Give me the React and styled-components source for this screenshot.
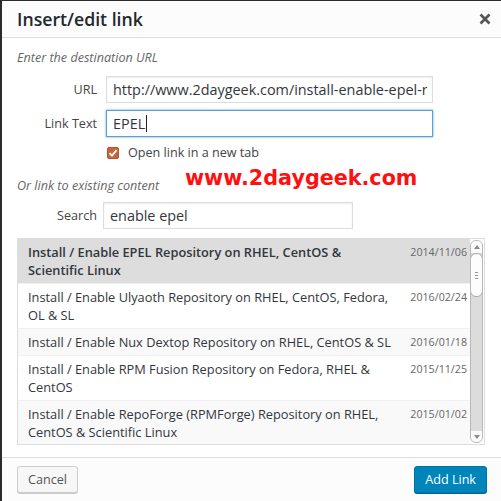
import React from "react";
import styled, { createGlobalStyle } from "styled-components";

const Global = createGlobalStyle`
  html, body { margin: 0; padding: 0; background: #2b2b2b; }
  body { font-family: "Open Sans", "Noto Sans", sans-serif; }
  * { box-sizing: border-box; }
`;

const Backdrop = styled.div`
  width: 501px;
  height: 501px;
  background: #2b2b2b;
  padding: 1px 0 0 2px;
`;

const Dialog = styled.div`
  width: 499px;
  height: 500px;
  background: #fff;
  display: flex;
  flex-direction: column;
  color: #444;
`;

const Header = styled.div`
  height: 37px;
  flex: none;
  background: #fcfcfc;
  border-bottom: 1px solid #dddddd;
  display: flex;
  align-items: center;
  justify-content: space-between;
  padding: 0 10px 0 15px;
`;

const Title = styled.h1`
  margin: 0;
  font-size: 17.7px;
  font-weight: 600;
  color: #23282d;
  line-height: 36px;
`;

const CloseIcon = styled.svg`
  display: block;
  margin-top: -1px;
`;

const Body = styled.div`
  flex: 1;
  position: relative;
  padding: 11px 14px 0 15px;
  display: flex;
  flex-direction: column;
  overflow: hidden;
`;

const Hint = styled.div`
  font-style: italic;
  font-size: 12.6px;
  color: #666;
  line-height: 18px;
  margin: ${(p) => p.$mt || 0}px 0 ${(p) => p.$mb || 0}px;
`;

const FieldRow = styled.div`
  display: flex;
  align-items: center;
  height: 27px;
  flex: none;
  margin-top: ${(p) => p.$mt || 0}px;
`;

const Label = styled.label`
  width: ${(p) => p.$w}px;
  flex: none;
  text-align: right;
  font-size: 12.6px;
  color: #444;
  padding-right: ${(p) => p.$pr}px;
`;

const Input = styled.div`
  width: ${(p) => p.$w}px;
  height: 27px;
  border: 1px solid ${(p) => (p.$focus ? "#5b9dd9" : "#dddddd")};
  box-shadow: ${(p) =>
    p.$focus ? "0 0 2px rgba(30,140,190,0.8)" : "inset 0 1px 2px rgba(0,0,0,0.07)"};
  background: #fff;
  font-size: 14.4px;
  color: #32373c;
  padding: 0 5px 0 6px;
  display: flex;
  align-items: center;
`;

const InputText = styled.span`
  flex: 1;
  display: flex;
  align-items: center;
  white-space: nowrap;
  overflow: hidden;
`;

const Caret = styled.span`
  display: inline-block;
  width: 1px;
  height: 17px;
  background: #222;
  margin-left: 1px;
`;

const CheckRow = styled.div`
  display: flex;
  align-items: center;
  margin: 7px 0 0 90px;
  font-size: 12.6px;
  line-height: 18px;
  color: #444;
  gap: 9px;
`;

const Check = styled.span`
  width: 12px;
  height: 12px;
  border-radius: 2px;
  background: #c9643c;
  border: 1px solid #b5532d;
  display: flex;
  align-items: center;
  justify-content: center;
`;

const Watermark = styled.span`
  position: absolute;
  left: 183px;
  top: 130px;
  font-family: "DejaVu Sans", "Verdana", sans-serif;
  font-weight: bold;
  font-size: 20.7px;
  line-height: 1;
  color: #ff0f0f;
  pointer-events: none;
`;

const List = styled.div`
  margin-top: 9px;
  width: 468px;
  height: 207px;
  border: 1px solid #dddddd;
  display: flex;
  overflow: hidden;
  flex: none;
`;

const Rows = styled.div`
  flex: 1;
  display: flex;
  flex-direction: column;
`;

const Row = styled.div`
  display: flex;
  justify-content: space-between;
  align-items: flex-start;
  flex: none;
  padding: 4px 3px 4px 10px;
  border-bottom: 1px solid #f1f1f1;
  background: ${(p) => (p.$sel ? "#dddddd" : p.$alt ? "#f9f9f9" : "#fff")};
  font-size: 12.8px;
  line-height: 18px;
  color: #32373c;
  font-weight: ${(p) => (p.$sel ? 600 : 400)};
`;

const RowTitle = styled.span`
  width: 369px;
`;

const RowDate = styled.span`
  font-size: 10.7px;
  color: #666;
  font-weight: 400;
`;

const Scrollbar = styled.div`
  width: 14px;
  flex: none;
  padding: 1px 1px 1px 0;
  display: flex;
  flex-direction: column;
`;

const Track = styled.div`
  flex: 1;
  border: 1px solid #b8b8b8;
  border-radius: 6px;
  background: #dcdcdc;
  display: flex;
  flex-direction: column;
  overflow: hidden;
`;

const ArrowCap = styled.div`
  height: ${(p) => p.$h}px;
  background: #fbfbfb;
  display: flex;
  align-items: center;
  justify-content: center;
  flex: none;
`;

const Thumb = styled.div`
  height: 44px;
  background: #fdfdfd;
  border: 1px solid #a9a9a9;
  border-radius: 6px;
  margin: 0 -1px;
  display: flex;
  flex-direction: column;
  align-items: center;
  justify-content: center;
  gap: 2px;
  flex: none;
`;

const Grip = styled.span`
  width: 3px;
  height: 1px;
  background: #999;
`;

const Spacer = styled.div`
  flex: 1;
`;

const Footer = styled.div`
  height: 44px;
  flex: none;
  background: #fcfcfc;
  border-top: 1px solid #dddddd;
  display: flex;
  align-items: center;
  justify-content: space-between;
  padding: 0 14px 0 15px;
`;

const Button = styled.button`
  height: 27px;
  padding: 0 10px;
  font-family: "Open Sans", sans-serif;
  font-size: 12.6px;
  border-radius: 3px;
  border: 1px solid ${(p) => (p.$primary ? "#0073aa" : "#cccccc")};
  background: ${(p) => (p.$primary ? "#0085ba" : "#f7f7f7")};
  color: ${(p) => (p.$primary ? "#fff" : "#555")};
  box-shadow: ${(p) => (p.$primary ? "0 1px 0 #006799" : "0 1px 0 #cccccc")};
`;

const results = [
  { t: "Install / Enable EPEL Repository on RHEL, CentOS & Scientific Linux", d: "2014/11/06", sel: true },
  { t: "Install / Enable Ulyaoth Repository on RHEL, CentOS, Fedora, OL & SL", d: "2016/02/24" },
  { t: "Install / Enable Nux Dextop Repository on RHEL, CentOS & SL", d: "2016/01/18", alt: true },
  { t: "Install / Enable RPM Fusion Repository on Fedora, RHEL & CentOS", d: "2015/11/25" },
  { t: "Install / Enable RepoForge (RPMForge) Repository on RHEL, CentOS & Scientific Linux", d: "2015/01/02", alt: true },
];

export default function App() {
  return (
    <>
      <Global />
      <Backdrop>
        <Dialog>
          <Header>
            <Title>Insert/edit link</Title>
            <CloseIcon width="12" height="12" viewBox="0 0 12 12">
              <path d="M1.5 1.5 L10.5 10.5 M10.5 1.5 L1.5 10.5" stroke="#555" strokeWidth="2.6" />
            </CloseIcon>
          </Header>
          <Body>
            <Hint $mb={9}>Enter the destination URL</Hint>
            <FieldRow>
              <Label $w={89} $pr={9}>URL</Label>
              <Input $w={327}>
                <InputText>http://www.2daygeek.com/install-enable-epel-repository-on-rhel-centos</InputText>
              </Input>
            </FieldRow>
            <FieldRow $mt={7}>
              <Label $w={89} $pr={9}>Link Text</Label>
              <Input $w={327} $focus>
                <InputText>
                  EPEL<Caret />
                </InputText>
              </Input>
            </FieldRow>
            <CheckRow>
              <Check>
                <svg width="10" height="10" viewBox="0 0 10 10">
                  <path d="M1.5 5.2 L4 7.6 L8.6 2.2" fill="none" stroke="#fff" strokeWidth="1.8" />
                </svg>
              </Check>
              Open link in a new tab
            </CheckRow>
            <Hint $mt={15}>Or link to existing content</Hint>
            <Watermark>www.2daygeek.com</Watermark>
            <FieldRow $mt={7}>
              <Label $w={86} $pr={6}>Search</Label>
              <Input $w={250}>
                <InputText>enable epel</InputText>
              </Input>
            </FieldRow>
            <List>
              <Rows>
                {results.map((r) => (
                  <Row key={r.d} $sel={r.sel} $alt={r.alt}>
                    <RowTitle>{r.t}</RowTitle>
                    <RowDate>{r.d}</RowDate>
                  </Row>
                ))}
              </Rows>
              <Scrollbar>
                <Track>
                  <ArrowCap $h={12}>
                    <svg width="6" height="4" viewBox="0 0 6 4">
                      <path d="M0 4 L3 0 L6 4 Z" fill="#888" />
                    </svg>
                  </ArrowCap>
                  <Thumb>
                    <Grip />
                    <Grip />
                    <Grip />
                  </Thumb>
                  <Spacer />
                  <ArrowCap $h={11}>
                    <svg width="6" height="4" viewBox="0 0 6 4">
                      <path d="M0 0 L3 4 L6 0 Z" fill="#888" />
                    </svg>
                  </ArrowCap>
                </Track>
              </Scrollbar>
            </List>
          </Body>
          <Footer>
            <Button>Cancel</Button>
            <Button $primary>Add Link</Button>
          </Footer>
        </Dialog>
      </Backdrop>
    </>
  );
}
